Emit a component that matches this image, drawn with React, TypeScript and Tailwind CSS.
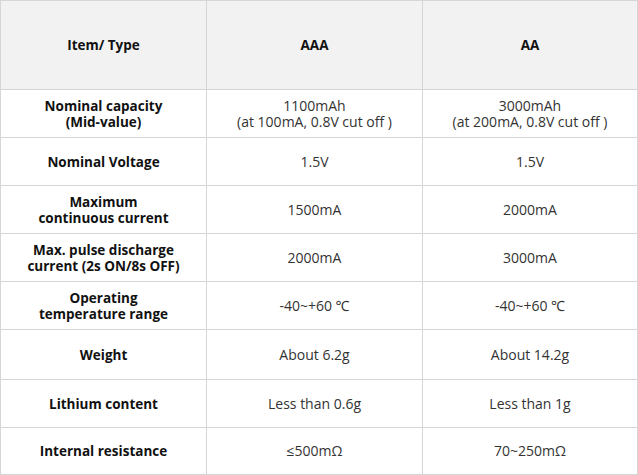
import React from "react";

const rows: { label: string[]; aaa: string[]; aa: string[]; h: string }[] = [
  { label: ["Nominal capacity", "(Mid-value)"], aaa: ["1100mAh", "(at 100mA, 0.8V cut off )"], aa: ["3000mAh", "(at 200mA, 0.8V cut off )"], h: "h-[48px]" },
  { label: ["Nominal Voltage"], aaa: ["1.5V"], aa: ["1.5V"], h: "h-[48px]" },
  { label: ["Maximum", "continuous current"], aaa: ["1500mA"], aa: ["2000mA"], h: "h-[48px]" },
  { label: ["Max. pulse discharge", "current (2s ON/8s OFF)"], aaa: ["2000mA"], aa: ["3000mA"], h: "h-[48px]" },
  { label: ["Operating", "temperature range"], aaa: ["-40~+60 ℃"], aa: ["-40~+60 ℃"], h: "h-[48px]" },
  { label: ["Weight"], aaa: ["About 6.2g"], aa: ["About 14.2g"], h: "h-[50px]" },
  { label: ["Lithium content"], aaa: ["Less than 0.6g"], aa: ["Less than 1g"], h: "h-[48px]" },
  { label: ["Internal resistance"], aaa: ["≤500mΩ"], aa: ["70~250mΩ"], h: "h-[47px]" },
];

function Cell({ lines, bold, h, bg }: { lines: string[]; bold?: boolean; h: string; bg?: string }) {
  return (
    <div
      className={`${h} ${bg ?? "bg-white"} border-r border-b border-[#d6d6d6] flex flex-col items-center justify-center text-center ${
        bold ? "font-bold text-[#111] text-[13.5px]" : "text-[#333] text-[14px]"
      }`}
    >
      {lines.map((l, i) => (
        <div key={i} className="h-[16px] leading-[16px] whitespace-nowrap">
          {l}
        </div>
      ))}
    </div>
  );
}

export default function App() {
  return (
    <div
      className="w-[638px] h-[475px] bg-white"
      style={{ fontFamily: '"Open Sans", "Noto Sans", sans-serif' }}
    >
      <div className="grid grid-cols-[206px_216px_215px] border-l border-t border-[#d6d6d6]">
        <Cell lines={["Item/ Type"]} bold h="h-[89px]" bg="bg-[#f2f2f2]" />
        <Cell lines={["AAA"]} bold h="h-[89px]" bg="bg-[#f2f2f2]" />
        <Cell lines={["AA"]} bold h="h-[89px]" bg="bg-[#f2f2f2]" />
        {rows.map((r, i) => (
          <React.Fragment key={i}>
            <Cell lines={r.label} bold h={r.h} />
            <Cell lines={r.aaa} h={r.h} />
            <Cell lines={r.aa} h={r.h} />
          </React.Fragment>
        ))}
      </div>
    </div>
  );
}
